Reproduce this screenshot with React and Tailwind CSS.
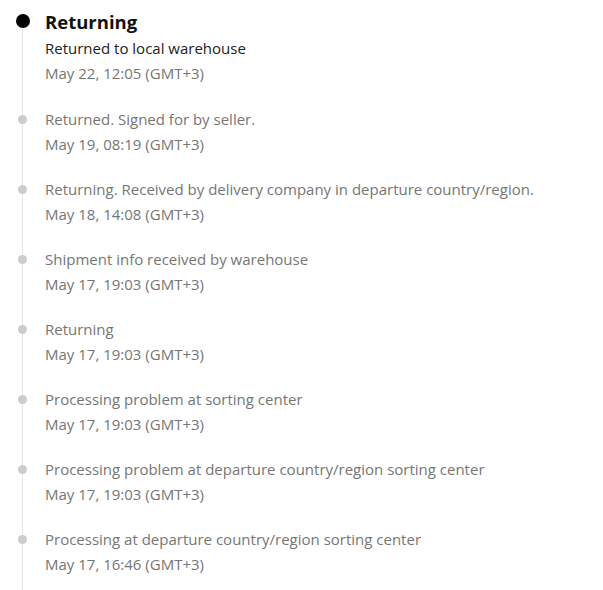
const events = [
  { text: 'Returned. Signed for by seller.', date: 'May 19, 08:19 (GMT+3)' },
  { text: 'Returning. Received by delivery company in departure country/region.', date: 'May 18, 14:08 (GMT+3)' },
  { text: 'Shipment info received by warehouse', date: 'May 17, 19:03 (GMT+3)' },
  { text: 'Returning', date: 'May 17, 19:03 (GMT+3)' },
  { text: 'Processing problem at sorting center', date: 'May 17, 19:03 (GMT+3)' },
  { text: 'Processing problem at departure country/region sorting center', date: 'May 17, 19:03 (GMT+3)' },
  { text: 'Processing at departure country/region sorting center', date: 'May 17, 16:46 (GMT+3)' },
]

function Rail({ big }) {
  return (
    <div className="w-[45px] shrink-0 flex flex-col items-center">
      <div className={big ? 'h-[6px]' : 'w-px h-[9px] bg-[#e5e5e5]'} />
      <span className={big ? 'w-[14px] h-[14px] rounded-full bg-black' : 'w-[9px] h-[9px] rounded-full bg-[#cccccc]'} />
      <div className="w-px flex-1 bg-[#e5e5e5]" />
    </div>
  )
}

export default function App() {
  return (
    <div className="w-[603px] h-[590px] overflow-hidden bg-white pt-2" style={{ fontFamily: '"Open Sans", sans-serif' }}>
      <div className="flex">
        <Rail big />
        <div className="pb-5">
          <div className="text-[18.5px] leading-[28px] font-bold text-[#111]">Returning</div>
          <div className="text-[15px] leading-[25px] text-[#222]">Returned to local warehouse</div>
          <div className="text-[15px] leading-[25px] text-[#767676]">May 22, 12:05 (GMT+3)</div>
        </div>
      </div>

      {events.map((e, i) => (
        <div key={i} className="flex">
          <Rail />
          <div className="pt-px pb-[19px] text-[15px] leading-[25px] text-[#767676]">
            <div>{e.text}</div>
            <div>{e.date}</div>
          </div>
        </div>
      ))}
    </div>
  )
}
